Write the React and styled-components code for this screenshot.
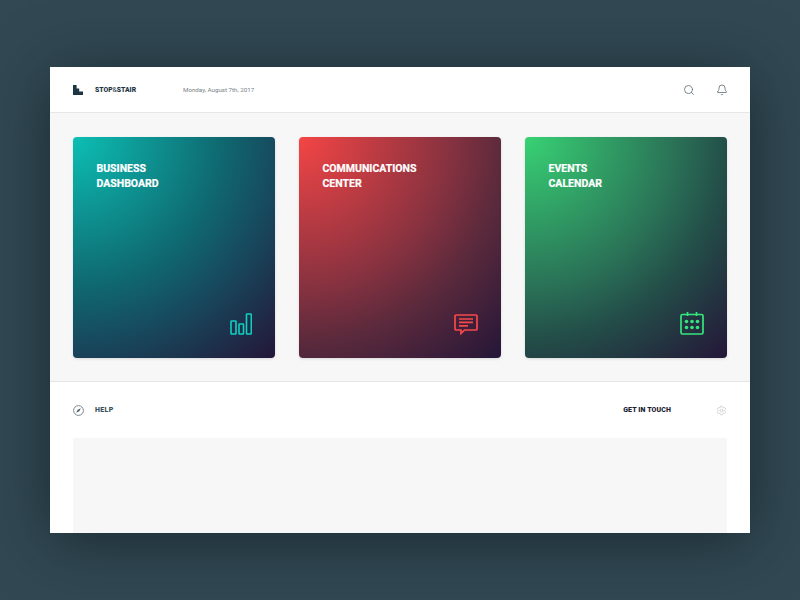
import React from "react";
import styled, { createGlobalStyle } from "styled-components";
import { Search, Bell, Settings } from "lucide-react";

const GlobalStyle = createGlobalStyle`
  html, body {
    margin: 0;
    padding: 0;
    height: 100%;
  }
  body {
    background-color: #324954;
    font-family: "Roboto", "Noto Sans", sans-serif;
    overflow: hidden;
  }
`;

const cards = [
  {
    title: ["BUSINESS", "DASHBOARD"],
    stops: ["#0cbfb4", "#0f6870", "#174a5e"],
    accent: "#0fcfc0",
    icon: "bars",
  },
  {
    title: ["COMMUNICATIONS", "CENTER"],
    stops: ["#f44545", "#883240", "#5c2a3c"],
    accent: "#f8484a",
    icon: "chat",
  },
  {
    title: ["EVENTS", "CALENDAR"],
    stops: ["#38d274", "#2a7257", "#234d48"],
    accent: "#35e67e",
    icon: "calendar",
  },
];

function CardIcon({ type, color }) {
  if (type === "bars") {
    return (
      <svg width="22" height="22" viewBox="0 0 22 22" fill="none" stroke={color} strokeWidth="1.6">
        <rect x="1" y="8" width="5" height="13" rx="0.5" />
        <rect x="9" y="11" width="4.5" height="10" rx="0.5" />
        <rect x="16.5" y="1" width="4.8" height="20" rx="0.5" />
      </svg>
    );
  }
  if (type === "chat") {
    return (
      <svg width="24" height="21" viewBox="0 0 24 21" fill="none" stroke={color} strokeWidth="1.7">
        <path d="M2 1h20a1 1 0 0 1 1 1v13a1 1 0 0 1-1 1H10.5L7 19.5V16H2a1 1 0 0 1-1-1V2a1 1 0 0 1 1-1z" />
        <path d="M5 5h14M5 8.4h14M5 11.8h9" />
      </svg>
    );
  }
  return (
    <svg width="24" height="23" viewBox="0 0 24 23" fill="none" stroke={color} strokeWidth="1.7">
      <rect x="1" y="2.5" width="22" height="19.5" rx="1.5" />
      <path d="M7.5 0v4M16.5 0v4" />
      <g fill={color} stroke="none">
        <circle cx="6.5" cy="9.5" r="1.8" />
        <circle cx="12" cy="9.5" r="1.8" />
        <circle cx="17.5" cy="9.5" r="1.8" />
        <circle cx="6.5" cy="15.5" r="1.8" />
        <circle cx="12" cy="15.5" r="1.8" />
        <circle cx="17.5" cy="15.5" r="1.8" />
      </g>
    </svg>
  );
}

export default function App() {
  return (
    <Page>
      <GlobalStyle />
      <Window>
        <Header>
          <Brand>
            <Logo viewBox="0 0 10 10">
              <path d="M0 0h3.6v3.4h2.6v3h3.8V10H0z" fill="#1d3442" />
            </Logo>
            <BrandName>
              STOP<Amp>&amp;</Amp>STAIR
            </BrandName>
          </Brand>
          <DateText>Monday, August 7th, 2017</DateText>
          <HeaderIcons>
            <Search size={12} strokeWidth={1.6} color="#5d6a72" />
            <Bell size={12} strokeWidth={1.6} color="#5d6a72" />
          </HeaderIcons>
        </Header>
        <CardSection>
          {cards.map((card) => (
            <Card key={card.icon} $stops={card.stops}>
              <CardTitle>
                {card.title[0]}
                <br />
                {card.title[1]}
              </CardTitle>
              <CardIconWrap>
                <CardIcon type={card.icon} color={card.accent} />
              </CardIconWrap>
            </Card>
          ))}
        </CardSection>
        <Footer>
          <HelpRow>
            <HelpLeft>
              <svg width="11" height="11" viewBox="0 0 11 11" fill="none">
                <circle cx="5.5" cy="5.5" r="4.9" stroke="#6b7a83" strokeWidth="0.9" />
                <path d="M7.8 3.2 6.3 6.3 3.2 7.8 4.7 4.7z" fill="#4c5f6a" />
              </svg>
              <HelpLabel>HELP</HelpLabel>
            </HelpLeft>
            <HelpRight>
              <TouchLink>GET IN TOUCH</TouchLink>
              <Settings size={11} strokeWidth={1.3} color="#b9bec1" />
            </HelpRight>
          </HelpRow>
          <GreyPanel />
        </Footer>
      </Window>
    </Page>
  );
}

const Page = styled.div`
  height: 600px;
  padding-top: 67px;
  box-sizing: border-box;
  display: flex;
  justify-content: center;
`;

const Window = styled.div`
  width: 700px;
  height: 466px;
  overflow: hidden;
  background-color: #ffffff;
  box-shadow: 0 8px 60px rgba(16, 28, 34, 0.7);
`;

const Header = styled.div`
  height: 45px;
  padding: 0 22px 0 23px;
  display: flex;
  align-items: center;
  border-bottom: 1px solid #e6e6e6;
`;

const Brand = styled.div`
  width: 110px;
  display: flex;
  align-items: center;
  gap: 12px;
`;

const Logo = styled.svg`
  width: 10px;
  height: 10px;
`;

const BrandName = styled.div`
  font-size: 6.8px;
  font-weight: 900;
  color: #1d3442;
`;

const Amp = styled.span`
  font-weight: 400;
`;

const DateText = styled.div`
  font-size: 6.2px;
  color: #777f84;
`;

const HeaderIcons = styled.div`
  margin-left: auto;
  display: flex;
  align-items: center;
  gap: 21px;
`;

const CardSection = styled.div`
  height: 269px;
  box-sizing: border-box;
  padding: 24px 23px;
  display: grid;
  grid-template-columns: repeat(3, 202px);
  justify-content: space-between;
  background-color: #f7f7f7;
  border-bottom: 1px solid #e6e6e6;
`;

const Card = styled.div`
  position: relative;
  height: 221px;
  box-sizing: border-box;
  padding: 24px 24px 24px 23.5px;
  border-radius: 4px;
  background: radial-gradient(
    circle farthest-corner at 0 0,
    ${({ $stops }) => $stops[0]} 0%,
    ${({ $stops }) => $stops[1]} 50%,
    ${({ $stops }) => $stops[2]} 68%,
    #241638 100%
  );
  box-shadow: 0 1px 3px rgba(0, 0, 0, 0.12);
`;

const CardTitle = styled.div`
  font-size: 10.5px;
  line-height: 15px;
  font-weight: 700;
  color: #ffffff;
  -webkit-text-stroke: 0.2px #ffffff;
`;

const CardIconWrap = styled.div`
  position: absolute;
  right: 23px;
  bottom: 23px;
  line-height: 0;
`;

const Footer = styled.div`
  padding: 0 23px;
`;

const HelpRow = styled.div`
  height: 56px;
  display: flex;
  align-items: center;
  justify-content: space-between;
`;

const HelpLeft = styled.div`
  display: flex;
  align-items: center;
  gap: 11px;
`;

const HelpLabel = styled.div`
  font-size: 7px;
  font-weight: 900;
  letter-spacing: 0.35px;
  color: #3a4f5a;
`;

const HelpRight = styled.div`
  display: flex;
  align-items: center;
  gap: 45px;
`;

const TouchLink = styled.div`
  font-size: 7px;
  font-weight: 900;
  letter-spacing: 0.1px;
  color: #1a2230;
`;

const GreyPanel = styled.div`
  height: 120px;
  background-color: #f7f7f7;
`;
